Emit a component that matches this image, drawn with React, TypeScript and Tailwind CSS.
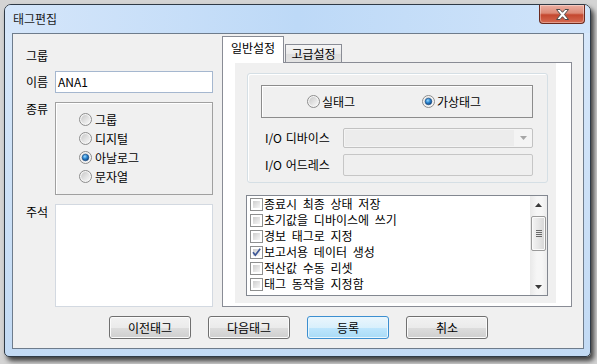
import React from "react";

function Radio({ checked }: { checked?: boolean }) {
  return (
    <svg width="13" height="13" viewBox="0 0 13 13" className="shrink-0">
      <defs>
        <linearGradient id="rgIn" x1="0" y1="0" x2="1" y2="1">
          <stop offset="0" stopColor="#c9c9c9" />
          <stop offset="1" stopColor="#f8f8f8" />
        </linearGradient>
        <radialGradient id="rgDot" cx="0.4" cy="0.35" r="0.7">
          <stop offset="0" stopColor="#9fdcff" />
          <stop offset="0.45" stopColor="#2f8ad4" />
          <stop offset="1" stopColor="#0b3c78" />
        </radialGradient>
      </defs>
      <circle cx="6.5" cy="6.5" r="6" fill="#f4f4f4" stroke="#8c8c8c" />
      <circle cx="6.5" cy="6.5" r="4.4" fill="url(#rgIn)" />
      {checked && <circle cx="6.5" cy="6.5" r="3.3" fill="url(#rgDot)" stroke="#184a82" strokeWidth="0.6" />}
    </svg>
  );
}

function Check({ checked }: { checked?: boolean }) {
  return (
    <span className="relative block w-[13px] h-[13px] shrink-0 border border-[#8e8f8f] bg-white p-[2px]">
      <span className="block w-full h-full bg-gradient-to-br from-[#cdcdcd] to-[#f7f7f7]" />
      {checked && (
        <svg width="13" height="13" viewBox="0 0 13 13" className="absolute -left-[1px] -top-[1px]">
          <path d="M3 6.2 L5.3 9.2 L10.2 2.8" fill="none" stroke="#3d5796" strokeWidth="1.7" />
        </svg>
      )}
    </span>
  );
}

function CloseButton() {
  return (
    <div className="mr-[5px] w-[46px] h-[19px] border border-[#6b2a1e] border-t-0 rounded-b-[4px] bg-[linear-gradient(#ecaea2_0%,#dc8a76_45%,#c4472f_55%,#d66b52_100%)] shadow-[inset_0_0_0_1px_rgba(255,255,255,0.35)] flex items-center justify-center">
      <svg width="13" height="11" viewBox="0 0 13 11">
        <polygon
          points="0.5,0.5 4,0.5 6.5,3.3 9,0.5 12.5,0.5 8.4,5.5 12.5,10.5 9,10.5 6.5,7.7 4,10.5 0.5,10.5 4.6,5.5"
          fill="#ffffff"
          stroke="#4a4a4a"
          strokeWidth="1"
        />
      </svg>
    </div>
  );
}

function Btn({ label, def }: { label: string; def?: boolean }) {
  return (
    <div
      className={
        def
          ? "w-[82px] h-[23px] rounded-[3px] border border-[#3c8fd0] bg-[linear-gradient(#eaf6fd_0%,#d9f0fc_50%,#bee6fd_51%,#a9dbf6_100%)] shadow-[inset_0_0_0_1px_#e8f6fe] flex items-center justify-center leading-[14px]"
          : "w-[82px] h-[23px] rounded-[3px] border border-[#707070] bg-[linear-gradient(#f2f2f2_0%,#ebebeb_50%,#dddddd_51%,#cfcfcf_100%)] shadow-[inset_0_0_0_1px_#fbfbfb] flex items-center justify-center leading-[14px]"
      }
    >
      {label}
    </div>
  );
}

const listItems = [
  { t: "종료시 최종 상태 저장", c: false },
  { t: "초기값을 디바이스에 쓰기", c: false },
  { t: "경보 태그로 지정", c: false },
  { t: "보고서용 데이터 생성", c: true },
  { t: "적산값 수동 리셋", c: false },
  { t: "태그 동작을 지정함", c: false },
];

export default function App() {
  return (
    <div className="w-[597px] h-[364px] bg-[#d4d4d4] pt-[4px] pl-[4px] overflow-hidden font-[family-name:'Noto_Sans_CJK_KR','Noto_Sans',sans-serif] text-[12px] [word-spacing:3px] text-black">
      <div className="w-[587px] h-[353px] border border-[#2f3a46] rounded-t-[7px] rounded-b-[5px] bg-gradient-to-b from-[#d8e8fa] to-[#c2daf4] shadow-[3px_4px_5px_rgba(0,0,0,0.7)] flex flex-col">
        {/* title bar */}
        <div className="h-[28px] shrink-0 flex items-start justify-between rounded-t-[6px] bg-gradient-to-r from-[#d5e6fa] via-[#bdd9f7] to-[#d0e4fa]">
          <span className="mt-[7px] ml-[8px] leading-[14px] text-[#1a1a1a]">태그편집</span>
          <CloseButton />
        </div>
        {/* client frame */}
        <div className="pl-[7px] pr-[6px] pb-[7px]">
          <div className="w-[572px] h-[316px] border border-[#6e7c8c] bg-[#f0f0f0] flex flex-col">
            <div className="h-[273px] flex items-start">
              {/* left column */}
              <div className="ml-[13px] w-[187px] flex flex-col">
                <div className="mt-[15px] leading-[14px]">그룹</div>
                <div className="mt-[8px] flex items-center h-[22px]">
                  <span className="w-[29px] leading-[14px]">이름</span>
                  <div className="w-[158px] h-[22px] border border-[#a5b7cf] bg-white flex items-center pl-[2px] leading-[14px]">
                    ANA1
                  </div>
                </div>
                <div className="mt-[9px] flex items-start">
                  <span className="w-[29px] leading-[14px]">종류</span>
                  <div className="w-[158px] h-[93px] border border-[#a0a0a0] shadow-[inset_1px_1px_0_#ffffff] pt-[7px] pl-[23px] flex flex-col">
                    {[
                      { t: "그룹", c: false },
                      { t: "디지털", c: false },
                      { t: "아날로그", c: true },
                      { t: "문자열", c: false },
                    ].map((r) => (
                      <div key={r.t} className="h-[19px] flex items-center gap-[3px] leading-[14px]">
                        <Radio checked={r.c} />
                        <span>{r.t}</span>
                      </div>
                    ))}
                  </div>
                </div>
                <div className="mt-[9px] flex items-start">
                  <span className="w-[29px] mt-[1px] leading-[14px]">주석</span>
                  <div className="w-[158px] h-[103px] border border-[#d3d9e1] bg-white" />
                </div>
              </div>

              {/* tab control */}
              <div className="ml-[9px] mt-[2px] w-[350px] flex flex-col">
                <div className="h-[26px] flex items-end relative z-10">
                  <div className="w-[62px] h-[27px] -mb-[1px] bg-white border border-b-0 border-[#898c95] flex justify-center pt-[4px] leading-[14px]">
                    일반설정
                  </div>
                  <div className="ml-[1px] w-[57px] h-[18px] border border-b-0 border-[#898c95] bg-[linear-gradient(#f5f5f5_0%,#ebebeb_50%,#dedede_51%,#e3e3e3_100%)] flex justify-center items-center leading-[14px]">
                    고급설정
                  </div>
                </div>
                <div className="h-[245px] border border-[#898c95] bg-white">
                  <div className="ml-[12px] w-[321px] h-[240px] bg-[#f0f0f0] flex flex-col">
                    {/* group box */}
                    <div className="ml-[12px] mt-[10px] w-[301px] h-[110px] border border-[#d5dfe5] rounded-[3px] shadow-[inset_1px_1px_0_#ffffff] flex flex-col">
                      <div className="ml-[13px] mt-[11px] w-[272px] h-[33px] border border-[#8c8c8c] shadow-[inset_1px_1px_0_#ffffff] flex items-center pl-[45px] leading-[14px]">
                        <div className="w-[115px] flex items-center gap-[2px]">
                          <Radio />
                          <span>실태그</span>
                        </div>
                        <div className="flex items-center gap-[2px]">
                          <Radio checked />
                          <span>가상태그</span>
                        </div>
                      </div>
                      <div className="mt-[10px] h-[20px] flex items-center">
                        <span className="ml-[17px] w-[78px] leading-[14px] [word-spacing:1px]">I/O 디바이스</span>
                        <div className="w-[190px] h-[20px] border border-[#c2c2c2] rounded-[2px] bg-[#f4f4f4] flex items-stretch">
                          <div className="w-[169px] m-[1px] bg-[#ececec]" />
                          <div className="flex-1 flex items-center justify-center">
                            <svg width="7" height="4" viewBox="0 0 7 4">
                              <polygon points="0,0 7,0 3.5,4" fill="#a6a6a6" />
                            </svg>
                          </div>
                        </div>
                      </div>
                      <div className="mt-[6px] h-[22px] flex items-center">
                        <span className="ml-[17px] w-[78px] leading-[14px] [word-spacing:1px]">I/O 어드레스</span>
                        <div className="w-[190px] h-[22px] border border-[#c6c6c6] rounded-[2px] bg-[#efefef]" />
                      </div>
                    </div>
                    {/* list box */}
                    <div className="ml-[11px] mt-[12px] w-[302px] h-[101px] border border-[#828790] bg-white flex">
                      <div className="flex-1 flex flex-col pl-[3px]">
                        {listItems.map((it) => (
                          <div key={it.t} className="h-[16px] flex items-center gap-[1px] leading-[14px] whitespace-nowrap">
                            <Check checked={it.c} />
                            <span>{it.t}</span>
                          </div>
                        ))}
                      </div>
                      {/* scrollbar */}
                      <div className="w-[17px] h-full bg-[linear-gradient(90deg,#e9e9e9,#f6f6f6_40%,#f6f6f6_70%,#ececec)] flex flex-col">
                        <div className="h-[17px] flex items-center justify-center">
                          <svg width="7" height="4" viewBox="0 0 7 4">
                            <polygon points="0,4 7,4 3.5,0" fill="#3a3a3a" />
                          </svg>
                        </div>
                        <div className="mt-[3px] ml-[1px] w-[15px] h-[35px] rounded-[2px] border border-[#9a9a9a] bg-[linear-gradient(90deg,#f4f4f4,#e6e6e6_50%,#d6d6d6)] shadow-[inset_0_0_0_1px_#fafafa] flex flex-col items-center justify-center gap-[1px]">
                          <span className="block w-[6px] h-[1px] bg-[#6a6a6a]" />
                          <span className="block w-[6px] h-[1px] bg-[#6a6a6a]" />
                          <span className="block w-[6px] h-[1px] bg-[#6a6a6a]" />
                          <span className="block w-[6px] h-[1px] bg-[#6a6a6a]" />
                        </div>
                        <div className="flex-1" />
                        <div className="h-[17px] flex items-center justify-center">
                          <svg width="7" height="4" viewBox="0 0 7 4">
                            <polygon points="0,0 7,0 3.5,4" fill="#3a3a3a" />
                          </svg>
                        </div>
                      </div>
                    </div>
                  </div>
                </div>
              </div>
            </div>

            {/* buttons */}
            <div className="mt-[9px] pl-[96px] flex gap-[17px]">
              <Btn label="이전태그" />
              <Btn label="다음태그" />
              <Btn label="등록" def />
              <Btn label="취소" />
            </div>
          </div>
        </div>
      </div>
    </div>
  );
}
